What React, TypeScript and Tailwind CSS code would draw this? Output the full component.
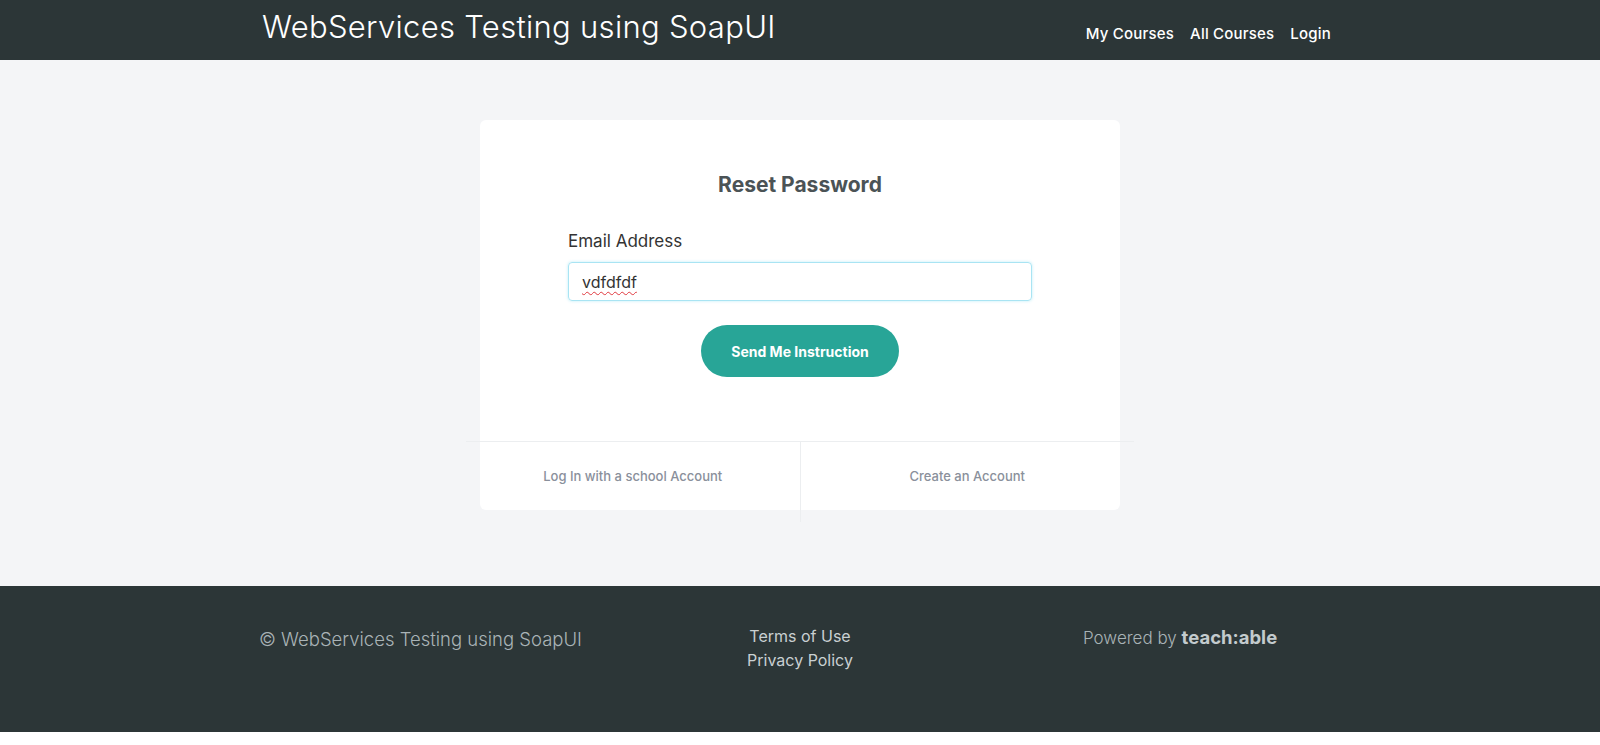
import React, { useState } from 'react';

const font = "font-['Inter','Liberation_Sans',sans-serif]";

const Header: React.FC = () => (
  <header className="bg-[#2c3637] h-[60px]">
    <div className="max-w-[1080px] mx-auto flex justify-between items-start">
      <a href="#" className="text-white text-[31px] font-light tracking-[0.3px] pt-[7px] pl-[2px] leading-[40px]">
        WebServices Testing using SoapUI
      </a>
      <nav className="flex gap-[16px] pt-[25px] pr-[9px] text-white text-[15px] font-medium tracking-[0.2px] leading-[18px]">
        <a href="#">My Courses</a>
        <a href="#">All Courses</a>
        <a href="#">Login</a>
      </nav>
    </div>
  </header>
);

const ResetCard: React.FC = () => {
  const [email, setEmail] = useState('vdfdfdf');

  return (
    <div className="w-[640px] mx-auto bg-white rounded-[6px] flex flex-col">
      <div className="pt-[53px] flex flex-col items-center">
        <h2 className="text-[21px] leading-[24px] font-bold text-[#4b5356]">Reset Password</h2>
        <div className="w-[464px] mt-[34px]">
          <label className="block text-[17px] leading-[20px] text-[#333333] font-normal">Email Address</label>
          <div className="mt-[11px] h-[39px] rounded-[4px] border border-[#a9e4f3] shadow-[0_0_3px_rgba(102,214,240,0.45)] flex items-center px-[13px]">
            <span className="text-[16px] text-[#333333] underline decoration-wavy decoration-[#e0383e] decoration-[1px] underline-offset-[3px]">
              {email}
            </span>
            <input className="hidden" value={email} onChange={e => setEmail(e.target.value)} />
          </div>
        </div>
        <button className="mt-[24px] w-[198px] h-[52px] rounded-full bg-[#28a597] text-white text-[14px] font-bold">
          Send Me Instruction
        </button>
      </div>
      <div className="mt-[64px] -mx-[14px] -mb-[12px] border-t border-[#eceef0] flex">
        <a href="#" className="flex-1 h-[80px] border-r border-[#eceef0] text-center pt-[26px] text-[13px] leading-[17px] font-medium text-[#8a909b]">
          Log In with a school Account
        </a>
        <a href="#" className="flex-1 h-[80px] text-center pt-[26px] text-[13px] leading-[17px] font-medium text-[#8a909b]">
          Create an Account
        </a>
      </div>
    </div>
  );
};

const Footer: React.FC = () => (
  <footer className="bg-[#2c3637] h-[146px]">
    <div className="max-w-[1080px] mx-auto grid grid-cols-3 pt-[40px]">
      <p className="text-[18.5px] font-light text-[#a9b3b6] leading-[26px] -ml-[1px]">
        © WebServices Testing using SoapUI
      </p>
      <div className="flex flex-col items-center text-[16px] text-[#c9d0d2] leading-[24px] -mt-[2px]">
        <a href="#">Terms of Use</a>
        <a href="#">Privacy Policy</a>
      </div>
      <p className="pl-[103px] text-[17px] text-[#a9b3b6] leading-[26px] font-light -mt-[2px]">
        Powered by <span className="font-bold text-[18.5px] text-[#c3cbcd]">teach:able</span>
      </p>
    </div>
  </footer>
);

export default function App() {
  return (
    <div className={`${font} bg-white min-h-[745px]`}>
      <Header />
      <main className="bg-[#f4f5f7] h-[526px] pt-[60px]">
        <ResetCard />
      </main>
      <Footer />
    </div>
  );
}
